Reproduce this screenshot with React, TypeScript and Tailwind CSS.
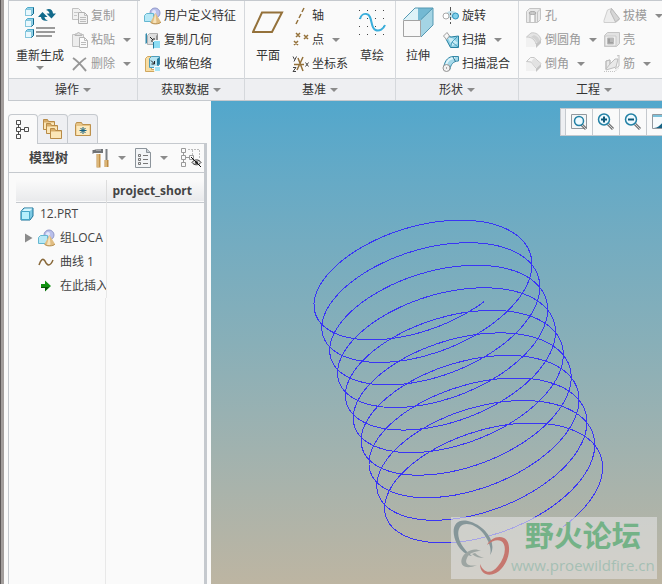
import { ReactNode, useState } from 'react';

interface ToolItem {
  label: string;
  icon: ReactNode;
  menu?: boolean;
}

const Caret = () => (
  <svg width="8" height="4" viewBox="0 0 8 4" className="shrink-0" aria-hidden="true">
    <path d="M0 0h8L4 4z" fill="#8b8b8b" />
  </svg>
);

const Icon = ({ children, size = 18 }: { children: ReactNode; size?: number }) => (
  <svg width={size} height={size} viewBox={`0 0 ${size} ${size}`} fill="none" className="shrink-0" aria-hidden="true">
    {children}
  </svg>
);

/* ---- large icons ---- */

const RegenerateIcon = () => (
  <Icon size={32}>
    {[0, 11, 22].map((y) => (
      <g key={y}>
        <path d={`M1.5 ${y + 3.5}l2-2h6v6l-2 2h-6z`} fill="#8fd3ea" stroke="#4fa9c9" />
        <path d={`M1.5 ${y + 3.5}h6v6h-6z`} fill="#e9f8fd" stroke="#86c6dc" />
        <path d={`M9.5 ${y + 1.5}v6l-2 2`} stroke="#12678c" />
      </g>
    ))}
    <path d="M14 11l4.500-5 5 5h-3c0 1.500 1.500 3 3.500 3.500C20 15.500 17 13.500 17 11z" fill="#126a8b" />
    <path d="M32 7.500l-4.500 5-5-5h3C25.500 6 24 4.500 22 4 25.500 1.500 29 4 29 7.500z" fill="#126a8b" />
    <path d="M12 22h19M12 26h19M12 30h16" stroke="#9a9a9a" strokeWidth="2" />
  </Icon>
);

const PlaneIcon = () => (
  <Icon size={32}>
    <path d="M10 6.500h20L20 26H1z" stroke="#94713a" strokeWidth="2" />
  </Icon>
);

const SketchIcon = () => (
  <Icon size={32}>
    {[4, 12, 20, 28].map((y) => (
      <path key={y} d={`M3 ${y + 0.5}h1M11 ${y + 0.5}h1M19 ${y + 0.5}h1M27 ${y + 0.5}h1`} stroke="#444" />
    ))}
    <path
      d="M4 13c1-4 4-5.500 6.500-5 6.500 1 3.500 14 9 16 4 1.500 8-1 9.500-5"
      stroke="#3aaedb"
      strokeWidth="2"
    />
  </Icon>
);

const ExtrudeIcon = () => (
  <Icon size={32}>
    <path d="M1 14L13 2h18L19 14z" fill="#b5e0ee" />
    <path d="M13 2h18v17H14z" fill="#74b9d3" />
    <path d="M1 14L13 2h3v12z" fill="#ddf2f8" />
    <path d="M19 14L31 2v17L19 31z" fill="#a4d4e4" />
    <path d="M1.500 13.500L13 2h18v17L19 31M19 13.500L31 2" stroke="#5599b3" />
    <path d="M1.500 14.500h17v16h-17z" fill="#f8f8f8" stroke="#a3a3a3" />
  </Icon>
);

/* ---- small icons ---- */

const CopyIcon = () => (
  <Icon>
    <path d="M1.500 1.500h6l3 3v8h-9z" fill="#f1f1f1" stroke="#c1c1c1" />
    <path d="M3 5.500h4M3 8.500h3" stroke="#c7c7c7" />
    <path d="M7.500 5.500h6l3 3v8h-9z" fill="#f1f1f1" stroke="#b0b0b0" />
    <path d="M13.500 5.500v3h3M9 10.500h6M9 12.500h6M9 14.500h6" stroke="#bcbcbc" />
  </Icon>
);

const PasteIcon = () => (
  <Icon>
    <path d="M1.500 3.500h11v12h-11z" fill="#ededed" stroke="#c4c4c4" />
    <path d="M4 4.500V3h2c0-2 3-2 3 0h2v1.500z" fill="#e0e0e0" stroke="#b5b5b5" />
    <path d="M8.500 6.500h5l3 3v7h-8z" fill="#fafafa" stroke="#b5b5b5" />
    <path d="M13.500 6.500v3h3M10 11.500h5M10 13.500h5" stroke="#bcbcbc" />
  </Icon>
);

const DeleteIcon = () => (
  <Icon>
    <path d="M2 3c5 3 8 7 13 13M15 3C10 6 6 11 2 15" stroke="#979797" strokeWidth="2" />
  </Icon>
);

const FeatureIcon = () => (
  <Icon>
    <circle cx="11" cy="6" r="5" fill="#b9bfea" stroke="#9199ca" />
    <circle cx="10" cy="5" r="2" fill="#e5e8fb" />
    <path d="M.5 8.500l2-2h7v6l-2 2h-7z" fill="#b7e8f6" stroke="#64b7d1" />
    <path d="M11.500 6L6.500 15c1 2.500 9 2.500 10.500 0z" fill="#e0bd83" />
    <path d="M11.500 6L9 15.500c.5 1 3 1 3.500 0z" fill="#f6e3bb" />
    <path d="M6.500 15c1 2.500 9 2.500 10.500 0" stroke="#b58c4b" />
  </Icon>
);

const CopyGeometryIcon = () => (
  <Icon>
    <path d="M1.500 3v10l1.500-1V2z" fill="#3289ab" />
    <path d="M3.500 4.500l2-2h8v9l-2 2h-8z" fill="#dedede" stroke="#b2b2b2" />
    <path d="M12 5l2-2.500v8L12 13z" fill="#949494" />
    <path d="M6 6l4 4m0-3v3H7" stroke="#222" />
    <path d="M9.500 9.500h7v8h-7z" fill="#8edcf3" stroke="#fafafa" />
    <path d="M9.500 11v6.500" stroke="#23789b" />
  </Icon>
);

const ShrinkwrapIcon = () => (
  <Icon>
    <path d="M1.500 3.500l2-2h4v13h6v2h-12z" fill="#f7dda4" stroke="#d0a75e" />
    <path d="M5.500 3.500l2-2h8v8l-3 3h-7z" fill="#b8e5f2" stroke="#4c9cbb" />
    <path d="M13 4l2.500-2v7L13 11z" fill="#257c9e" />
    <path d="M7 5.500l3.500 3.500m0-3v3h-3" stroke="#222" />
    <path d="M10.500 11.500h6v5h-6z" fill="#a6e6f6" stroke="#fafafa" />
  </Icon>
);

const AxisIcon = () => (
  <Icon>
    <path d="M12 1l-2 4M9 7l-2 4M6 13l-2 4" stroke="#94713a" strokeWidth="1.500" />
  </Icon>
);

const PointIcon = () => (
  <Icon>
    <path d="M4 2l4 4m0-4L4 6M12 4l4 4m0-4l-4 4M2 10l4 4m0-4l-4 4" stroke="#94713a" strokeWidth="1.500" />
  </Icon>
);

const CsysIcon = () => (
  <Icon>
    <path d="M2 9.500h10M6 3l5 13M11 2L5 15" stroke="#94713a" strokeWidth="1.500" />
    <path d="M1 1.500l1.500 3m2-3l-2.500 5M1 12.500h3l-3 4h3M13.500 7.500l3 4m0-4l-3 4" stroke="#444" />
  </Icon>
);

const RevolveIcon = () => (
  <Icon>
    <path d="M4 7c2-4 8-4 10-1v5h-9z" fill="#c2dfe9" />
    <path d="M8.500 0v4m0 2v2m0 2v3m0 2v2" stroke="#555" />
    <circle cx="4" cy="9" r="3" fill="#fff" stroke="#aaa" />
    <circle cx="13.500" cy="9" r="3" fill="#83d0ea" stroke="#2b93bd" />
  </Icon>
);

const SweepIcon = () => (
  <Icon>
    <path d="M4 4l5 2 7.500-1v11.500H8.500L4 8z" fill="#8fd0e5" stroke="#267f9f" />
    <path d="M6 7l4 0 6 5-6 3z" fill="#c9ecf6" />
    <path d="M16 5l-6 6 6 5M10 11l-1.500 5" stroke="#4ba0be" />
    <path d="M1.500 5L5 1.500 7.500 5 4.500 8.500z" fill="#f7f7f7" stroke="#9e9e9e" />
  </Icon>
);

const SweepBlendIcon = () => (
  <Icon>
    <path d="M2 11C3 5 7 1.500 11 1.500h5.500v4.500c-5 0-8 3.500-8.500 8.500z" fill="#a5d9ea" stroke="#3689a8" />
    <path d="M4 10C5 5.500 8 3 13 3" stroke="#e0f5fb" strokeWidth="2" />
    <path d="M11 2l2.500 4.500" stroke="#25718f" />
    <circle cx="4.500" cy="13" r="3.500" fill="#f2f2f2" stroke="#939393" />
    <path d="M4 13h1" stroke="#666" />
  </Icon>
);

const HoleIcon = () => (
  <Icon>
    <path d="M1.500 4.500l3-3h11v11l-3 3h-11z" fill="#e9e9e9" stroke="#c4c4c4" />
    <path d="M12.500 15V5l3-3" stroke="#c4c4c4" />
    <path d="M5 15V7c0-3 5-3 5 0v8" fill="#fafafa" stroke="#a4a4a4" />
    <ellipse cx="7.500" cy="6" rx="3.500" ry="1.500" fill="#ccc" stroke="#aaa" />
  </Icon>
);

const RoundIcon = () => (
  <Icon>
    <path d="M1 6l5-4c5-1 9 2 10 7l-6 7H1z" fill="#f1f1f1" />
    <path d="M1.500 6l4.500-4c5-1 9 2 10 7l-5 4C10 9 7 6 1.500 6z" fill="#e4e4e4" stroke="#cacaca" />
    <path d="M9 4c3 1 5 3 6 6l-3 2c-1-3-3-5-6-6z" fill="#d2d2d2" />
    <path d="M11 13l5-4v3l-5 5z" fill="#c4c4c4" />
  </Icon>
);

const ChamferIcon = () => (
  <Icon>
    <path d="M1 7l5-5 10 7-5 7H1z" fill="#f1f1f1" />
    <path d="M1.500 6.500l4-4H9l7 6-4.500 5L6 7z" fill="#f6f6f6" stroke="#c6c6c6" />
    <path d="M9 3l7 6-4 4-6-6z" fill="#e2e2e2" />
    <path d="M11 14l5-5v3l-5 5z" fill="#c4c4c4" />
  </Icon>
);

const DraftIcon = () => (
  <Icon>
    <path d="M1 13.500L4.500 3l4-1.500 8 11-4 3H1z" fill="#ededed" stroke="#cfcfcf" />
    <path d="M8.500 1.500l8 10-4 3.500-5-10z" fill="#d6d6d6" stroke="#b9b9b9" />
  </Icon>
);

const ShellIcon = () => (
  <Icon>
    <path d="M1.500 4.500l3-3h12v11l-3 3h-12z" fill="#e2e2e2" stroke="#c4c4c4" />
    <path d="M2 5h11v10H2z" fill="#efefef" stroke="#cacaca" />
    <path d="M4.500 7h6v6h-6z" fill="#9f9f9f" stroke="#bbb" />
    <path d="M7 7h4v4H7z" fill="#b8b8b8" />
  </Icon>
);

const RibIcon = () => (
  <Icon>
    <path d="M3 6l4-1v4l5-5h3l-2 8-10 3z" fill="#e9e9e9" stroke="#bdbdbd" />
    <path d="M3 6l4-1v4l-4 5zM14 1l2-1v11l-4 3" stroke="#bdbdbd" />
    <path d="M1 16.500h11l4-4" stroke="#c4c4c4" strokeDasharray="1 1" />
  </Icon>
);

/* ---- model tree icons ---- */

const TreeIcon = () => (
  <Icon size={20}>
    <path
      d="M3.500.5h4v4h-4zM3.500 7.500h4v4h-4zM11.500 7.500h4v4h-4zM3.500 14.500h4v4h-4zM5.500 4.500v3M7.500 9.500h4M5.500 11.500v3"
      stroke="#4d4d4d"
    />
  </Icon>
);

const FoldersIcon = () => (
  <Icon size={22}>
    {[[1.5, 1.5], [4.5, 5.5], [8.5, 10.5]].map(([x, y]) => (
      <g key={x}>
        <path d={`M${x} ${y}h4l1 2h6v8H${x}z`} fill="#d7ac68" stroke="#b88b47" />
        <path d={`M${x + 0.5} ${y + 3}h10v6.500h-10z`} fill="#fbe6b7" />
      </g>
    ))}
  </Icon>
);

const FavoritesIcon = () => (
  <Icon size={18}>
    <path d="M1.500 4.500l1-2h5l1 2h8v11h-15z" fill="#e7c486" stroke="#bd914c" />
    <path d="M2.500 6h13v9h-13z" fill="#fce9bd" />
    <path d="M9 7v7M5.500 10.500h7M6.500 8l5 5M11.500 8l-5 5" stroke="#135f82" />
  </Icon>
);

const HammerIcon = () => (
  <Icon size={20}>
    <path d="M2 2l3-1h6v4H2L.5 6V2z" fill="#707376" />
    <path d="M4 2h5" stroke="#cfd1d4" />
    <path d="M4.500 6h4v13.500h-4z" fill="#c3924a" />
    <path d="M6 6v13" stroke="#f5dba8" />
    <path d="M14.500 1v11" stroke="#7b8085" strokeWidth="2" />
    <path d="M12.500 12h4v7h-4z" fill="#bd8b43" />
    <path d="M14 12v7" stroke="#f5dba8" />
  </Icon>
);

const ListIcon = () => (
  <Icon size={20}>
    <path d="M1.500.5h11l4 4v15h-15z" fill="#f3f5f7" stroke="#8c949b" />
    <path d="M12.500.5v4h4" fill="#c7cdd2" stroke="#8c949b" />
    <path d="M4.500 6.500h2v2h-2zM4.500 10.500h2v2h-2zM4.500 14.500h2v2h-2z" stroke="#777" />
    <path d="M9 7.500h5M9 11.500h5M9 15.500h5" stroke="#777" />
  </Icon>
);

const HideTreeIcon = () => (
  <Icon size={22}>
    <path d="M1.500 1.500h4v4h-4zM1.500 8.500h4v4h-4zM9.500 8.500h4v4h-4zM1.500 15.500h4v4h-4zM3.500 5.500v3M5.500 10.500h4M3.500 12.500v3" stroke="#999" />
    <path d="M8 2.500h12M12.500 3v5M19.500 3v8" stroke="#bbb" strokeDasharray="2 1" />
    <path d="M12 15.500c2-3.500 7-3.500 9 0-2 3-7 3-9 0z" fill="#ddd" stroke="#333" />
    <circle cx="16.500" cy="15.500" r="1.500" fill="#333" />
    <path d="M11 10l10 10" stroke="#111" />
  </Icon>
);

const PartIcon = () => (
  <Icon size={14}>
    <path d="M1 4.500L4 1h9v8l-3 4H1z" fill="#7cc9e4" stroke="#1b7399" />
    <path d="M1.500 4.500h8v8h-8z" fill="#b6f0fc" stroke="#46a7c8" />
    <path d="M2 4l2.500-2.500h8L10 4z" fill="#d4f6fd" />
  </Icon>
);

const CurveIcon = () => (
  <Icon size={16}>
    <path d="M1 11c2-6 4-7 6-4 2 5 5 6 8-1" stroke="#886839" strokeWidth="1.500" />
  </Icon>
);

const InsertIcon = () => (
  <Icon size={16}>
    <path d="M3 6h4V2.500L13 8l-6 5.500V10H3z" fill="#119111" />
    <path d="M3 9h8L7 13v-3H3z" fill="#075207" />
  </Icon>
);

const Magnifier = ({ sign }: { sign?: string }) => (
  <Icon size={18}>
    {!sign && <path d="M1.500 1.500h15v14h-15z" fill="#f4f6f7" stroke="#92989e" />}
    <path d="M11 11l5 5" stroke="#777" strokeWidth="3" />
    <path d="M11 11l5 5" stroke="#d0d3d5" strokeWidth="1" />
    <circle cx={sign ? 7 : 9} cy={sign ? 6.5 : 8} r={sign ? 5.5 : 4.5} fill="#eefaff" stroke="#2381a5" strokeWidth="1.500" />
    {sign && <path d={sign} stroke="#0e5878" strokeWidth="2" />}
  </Icon>
);

const RepaintIcon = () => (
  <Icon size={18}>
    <path d="M1.500 1.500h15v14h-15z" fill="#f7fbfd" stroke="#92989e" />
    <path d="M2 2h14v2H2z" fill="#7bc0d9" />
    <path d="M3 15c6-1 6-4 14-10v10z" fill="#176486" />
  </Icon>
);

/* ---- ribbon ---- */

const ToolButton = ({ label, icon, menu, disabled }: ToolItem & { disabled?: boolean }) => (
  <button
    disabled={disabled}
    className={`flex h-6 items-center gap-0.5 whitespace-nowrap ${disabled ? 'text-[#999999]' : 'text-[#333333]'}`}
  >
    {icon}
    <span>{label}</span>
    {menu && <span className="ml-1.5"><Caret /></span>}
  </button>
);

const BigButton = ({ label, icon, menu }: ToolItem) => (
  <button className="flex shrink-0 flex-col items-center whitespace-nowrap pt-0.5">
    {icon}
    <span className="mt-2.5 leading-4">{label}</span>
    {menu && <span className="mt-0.5 flex"><Caret /></span>}
  </button>
);

const ToolColumn = ({ items, disabled }: { items: ToolItem[]; disabled?: boolean }) => (
  <div className="flex shrink-0 flex-col items-start">
    {items.map((item) => (
      <ToolButton key={item.label} {...item} disabled={disabled} />
    ))}
  </div>
);

const Group = ({ title, className, children }: { title: string; className: string; children: ReactNode }) => (
  <section className={`flex shrink-0 flex-col border-r border-[#d5d8dc] ${className}`}>
    <div className="flex h-[77px] pt-[3px]">{children}</div>
    <button className="flex h-[22px] items-center justify-center gap-1 border-t border-[#cdd1d5] bg-[#eeeff2]">
      {title}
      <Caret />
    </button>
  </section>
);

const clipboardItems: ToolItem[] = [
  { label: '复制', icon: <CopyIcon /> },
  { label: '粘贴', icon: <PasteIcon />, menu: true },
  { label: '删除', icon: <DeleteIcon />, menu: true },
];

const dataItems: ToolItem[] = [
  { label: '用户定义特征', icon: <FeatureIcon /> },
  { label: '复制几何', icon: <CopyGeometryIcon /> },
  { label: '收缩包络', icon: <ShrinkwrapIcon /> },
];

const datumItems: ToolItem[] = [
  { label: '轴', icon: <AxisIcon /> },
  { label: '点', icon: <PointIcon />, menu: true },
  { label: '坐标系', icon: <CsysIcon /> },
];

const shapeItems: ToolItem[] = [
  { label: '旋转', icon: <RevolveIcon /> },
  { label: '扫描', icon: <SweepIcon />, menu: true },
  { label: '扫描混合', icon: <SweepBlendIcon /> },
];

const engineeringItems: ToolItem[] = [
  { label: '孔', icon: <HoleIcon /> },
  { label: '倒圆角', icon: <RoundIcon />, menu: true },
  { label: '倒角', icon: <ChamferIcon />, menu: true },
];

const engineeringItems2: ToolItem[] = [
  { label: '拔模', icon: <DraftIcon />, menu: true },
  { label: '壳', icon: <ShellIcon /> },
  { label: '筋', icon: <RibIcon />, menu: true },
];

const Ribbon = () => (
  <header className="overflow-hidden border-b border-[#c5c9ce]">
    <div className="flex h-px">
      <div className="w-[132px] bg-[#c5c9ce]" />
      <div className="w-[51px]" />
      <div className="flex-1 bg-[#c5c9ce]" />
    </div>
    <div className="flex border-l border-[#c5c9ce]">
      <Group title="操作" className="w-[129px]">
        <div className="flex gap-[7px] pl-[7px]">
          <BigButton label="重新生成" icon={<RegenerateIcon />} menu />
          <ToolColumn items={clipboardItems} disabled />
        </div>
      </Group>
      <Group title="获取数据" className="w-[107px]">
        <div className="pl-1.5">
          <ToolColumn items={dataItems} />
        </div>
      </Group>
      <Group title="基准" className="w-[151px]">
        <div className="flex gap-2 pl-[7px]">
          <BigButton label="平面" icon={<PlaneIcon />} />
          <ToolColumn items={datumItems} />
          <BigButton label="草绘" icon={<SketchIcon />} />
        </div>
      </Group>
      <Group title="形状" className="w-[123px]">
        <div className="flex gap-2 pl-1.5">
          <BigButton label="拉伸" icon={<ExtrudeIcon />} />
          <ToolColumn items={shapeItems} />
        </div>
      </Group>
      <Group title="工程" className="min-w-[151px] grow">
        <div className="flex gap-1.5 pl-1.5">
          <ToolColumn items={engineeringItems} disabled />
          <ToolColumn items={engineeringItems2} disabled />
        </div>
      </Group>
    </div>
  </header>
);

/* ---- model tree ---- */

const tabs = [
  { name: '模型树', icon: <TreeIcon /> },
  { name: '文件夹浏览器', icon: <FoldersIcon /> },
  { name: '收藏夹', icon: <FavoritesIcon /> },
];

const treeRows = [
  { label: '12.PRT', icon: <PartIcon />, indent: 'pl-1 gap-1.5' },
  { label: '组LOCA', icon: <FeatureIcon />, indent: 'pl-2 gap-1', expandable: true },
  { label: '曲线 1', icon: <CurveIcon />, indent: 'pl-[22px] gap-1.5' },
  { label: '在此插入', icon: <InsertIcon />, indent: 'pl-[22px] gap-1.5' },
];

const ModelTree = () => {
  const [active, setActive] = useState(0);

  return (
    <aside className="flex w-[199px] shrink-0 flex-col pt-[13px]">
      <div className="flex" role="tablist">
        {tabs.map((tab, i) => (
          <button
            key={tab.name}
            role="tab"
            aria-label={tab.name}
            aria-selected={active === i}
            onClick={() => setActive(i)}
            className={`flex h-[30px] w-[30px] items-center justify-center rounded-t-sm border-t border-r first:border-l ${
              active === i ? 'border-[#c5c9ce]' : 'border-b border-[#c5c9ce] bg-[#eeeff2]'
            }`}
          >
            {tab.icon}
          </button>
        ))}
        <div className="flex-1 border-b border-[#c5c9ce]" />
      </div>
      <div className="flex flex-1 flex-col border-l border-r-[3px] border-[#c5c9ce]">
        <div className="flex h-[29px] items-center border-b border-[#c5c9ce] pl-5">
          <h2 className="mr-auto text-[13px] font-bold text-[#444444]">模型树</h2>
          <button aria-label="设置" className="flex items-center gap-1.5">
            <HammerIcon />
            <Caret />
          </button>
          <button aria-label="显示" className="ml-2 flex items-center gap-1.5">
            <ListIcon />
            <Caret />
          </button>
          <button aria-label="隐藏树列" className="ml-3 mr-0.5">
            <HideTreeIcon />
          </button>
        </div>
        <div className="flex flex-1 flex-col pt-[7px] pl-[7px]">
          <table className="w-full table-fixed border-collapse">
            <thead>
              <tr className="h-[22px] border-b border-[#c5c9ce] bg-linear-to-b from-[#fafafa] to-[#e9eaec]">
                <th className="w-[90px] border-r border-[#dddddd]" />
                <th className="px-1.5 text-left text-xs leading-4 font-bold text-[#444444]">project_short</th>
              </tr>
            </thead>
            <tbody>
              {treeRows.map((row) => (
                <tr key={row.label} className="h-6">
                  <td className="overflow-hidden border-r border-[#e8e8e8] p-0">
                    <div className={`flex items-center whitespace-nowrap text-[#444444] ${row.indent}`}>
                      {row.expandable && (
                        <svg width="10" height="10" viewBox="0 0 10 10" className="shrink-0" aria-hidden="true">
                          <path d="M1 .5v9L8.500 5z" fill="#8b8b8b" />
                        </svg>
                      )}
                      {row.icon}
                      <span>{row.label}</span>
                    </div>
                  </td>
                  <td />
                </tr>
              ))}
            </tbody>
          </table>
          <div className="flex flex-1">
            <div className="w-[90px] border-r border-[#e8e8e8]" />
          </div>
        </div>
      </div>
    </aside>
  );
};

/* ---- graphics area ---- */

// Helix projected on screen: ten turns, drifting along the axis by one pitch per turn
const helixPath = () => {
  const turns = 10;
  const steps = 120;
  let d = '';
  for (let i = 0; i <= turns * steps; i++) {
    const turn = i / steps;
    const t = turn * Math.PI * 2;
    const x = 207.2 + 7.85 * turn + 107 * Math.cos(t + 0.908);
    const y = 169.5 + 22.55 * turn + 65.4 * Math.cos(t - 1.073);
    d += `${i ? 'L' : 'M'}${x.toFixed(1)} ${y.toFixed(1)}`;
  }
  return d;
};

const viewTools = [
  { name: '重新调整', icon: <Magnifier /> },
  { name: '放大', icon: <Magnifier sign="M4 6.500h6M7 3.500v6" /> },
  { name: '缩小', icon: <Magnifier sign="M4 6.500h6" /> },
  { name: '重画', icon: <RepaintIcon /> },
];

const Viewport = () => (
  <main className="relative flex-1 overflow-hidden bg-linear-to-b from-[#52a7cc] via-[#88afb8] to-[#bdb5a2]">
    <svg width="451" height="483" viewBox="0 0 451 483" fill="none" aria-hidden="true">
      <path d={helixPath()} stroke="#3a35f5" shapeRendering="crispEdges" />
    </svg>
    <div className="absolute top-[7px] left-[349px] flex h-7 border border-[#c5c9ce] bg-[#eeeff2] pl-1">
      {viewTools.map((tool) => (
        <button
          key={tool.name}
          aria-label={tool.name}
          className="flex w-[27px] items-center justify-center border-l border-[#c5c9ce] bg-[#fafafa]"
        >
          {tool.icon}
        </button>
      ))}
    </div>
    <div className="absolute right-[5px] bottom-[5px] flex h-[62px] w-[206px] bg-[#dedede]/65">
      <svg width="60" height="62" viewBox="0 0 60 62" className="shrink-0" aria-hidden="true">
        <path
          fillRule="evenodd"
          fill="#859699"
          d="M39 38C47 26 34 8 17 4 3 1-1 13 6 27c4 7 9 11 15 12C10 31 4 18 9 10c4-6 16-3 23 6 6 8 9 16 7 22z"
        />
        <path
          fill="#c6776f"
          d="M36 28c3-6 11-10 17-7 8 4 6 21-2 30-8 10-22 9-22-4 4 10 12 10 18 2 8-9 9-22 3-25-4-2-9 0-14 4z"
        />
        <path
          fill="#9da5a2"
          d="M30 34c-7-4-16 0-19 7-3 8 4 12 15 7-8 2-13-1-10-7 2-5 8-7 14-7zM24 36c3 3 6 4 9 5-5 0-8-1-12-4z"
        />
      </svg>
      <div className="flex flex-1 flex-col items-center pr-2 whitespace-nowrap">
        <span className="mt-1 font-['Liberation_Sans','Noto_Sans_CJK_SC',sans-serif] text-[29px] leading-8 font-bold text-[#74b287]">
          野火论坛
        </span>
        <a href="#" className="font-['Open_Sans',sans-serif] text-[15px] leading-6 text-[#a5bfb4]">
          www.proewildfire.cn
        </a>
      </div>
    </div>
  </main>
);

export default function App() {
  return (
    <div className="flex min-h-screen overflow-hidden bg-[#fafafa] font-['Open_Sans','Noto_Sans_CJK_SC',sans-serif] text-xs text-[#333333]">
      <div className="mr-1 w-1 shrink-0 border-l border-[#5d5858] bg-[#a39e9c]" />
      <div className="flex min-w-0 flex-1 flex-col">
        <Ribbon />
        <div className="flex flex-1 gap-1">
          <ModelTree />
          <Viewport />
        </div>
      </div>
    </div>
  );
}
